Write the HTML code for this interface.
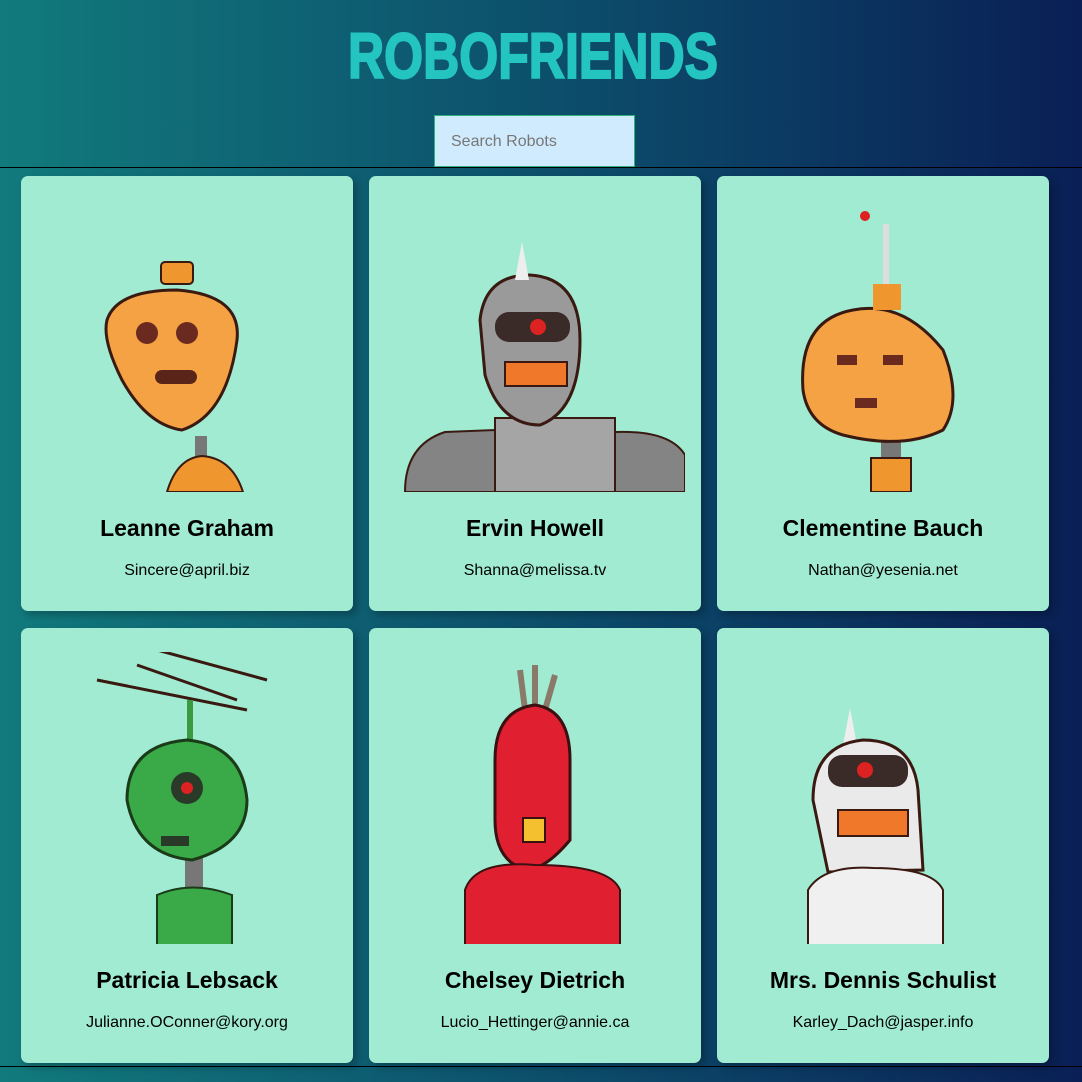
<!DOCTYPE html>
<html><head><meta charset="utf-8"><style>
*{margin:0;padding:0;box-sizing:border-box}
body{width:1082px;height:1082px;overflow:hidden;background:linear-gradient(90deg,#117a7c 0%,#0c4b6a 55%,#0a1f55 100%);font-family:"Liberation Sans",sans-serif}
.hdr{position:absolute;left:0;top:0;width:1082px;height:168px;border-bottom:1px solid #000}
.search{position:absolute;left:434px;top:115px;width:201px;height:52px;background:#d0ebfd;border:1px solid #2db27c;font-size:16px;color:#777;padding:17px 0 0 16px}
.card{position:absolute;width:332px;height:435px;background:#a0ebd2;border-radius:7px;box-shadow:4px 4px 8px rgba(0,0,0,.25);text-align:center;overflow:hidden}
.card svg{position:absolute;left:16px;top:24px}
.card h2{position:absolute;top:339px;width:100%;font-size:23px;font-weight:bold;color:#000}
.card p{position:absolute;top:386px;width:100%;font-size:16px;color:#000}
.bl{position:absolute;left:0;top:1066px;width:1082px;height:1px;background:#000}
</style></head><body>
<div class="hdr">
<svg width="1082" height="110" style="position:absolute;left:0;top:0">
<text x="348" y="78" textLength="370" lengthAdjust="spacingAndGlyphs" font-family="Liberation Sans" font-weight="bold" font-size="64" fill="#24c4c0" stroke="#24c4c0" stroke-width="2">ROBOFRIENDS</text>
</svg>
<div class="search">Search Robots</div>
</div>

<div class="card" style="left:21px;top:176px">
<svg width="300" height="292"><rect x="158" y="236" width="12" height="30" fill="#777"/><path d="M130 292 Q140 258 165 256 Q195 258 206 292Z" fill="#f0962e" stroke="#3a1a10" stroke-width="2"/><path d="M70 120 Q80 90 140 90 Q205 95 200 140 Q190 215 145 230 Q110 225 85 180 Q65 140 70 120Z" fill="#f5a244" stroke="#3a1a10" stroke-width="3"/><rect x="124" y="62" width="32" height="22" rx="4" fill="#f0962e" stroke="#3a1a10" stroke-width="2"/><circle cx="110" cy="133" r="11" fill="#6b2a20"/><circle cx="150" cy="133" r="11" fill="#6b2a20"/><rect x="118" y="170" width="42" height="14" rx="7" fill="#5a2418"/></svg>
<h2>Leanne Graham</h2><p>Sincere@april.biz</p></div>

<div class="card" style="left:369px;top:176px">
<svg width="300" height="292"><path d="M20 292 Q20 245 60 232 L110 230 L115 292Z" fill="#848484" stroke="#3a1a10" stroke-width="2"/><path d="M230 292 L230 232 Q285 230 300 255 L300 292Z" fill="#848484" stroke="#3a1a10" stroke-width="2"/><rect x="110" y="218" width="120" height="74" fill="#a5a5a5" stroke="#3a1a10" stroke-width="2"/><path d="M95 120 Q100 75 145 75 Q195 78 195 140 Q195 210 155 225 Q115 225 100 175Z" fill="#9a9a9a" stroke="#3a1a10" stroke-width="3"/><path d="M130 80 L137 42 L144 80Z" fill="#eee"/><rect x="110" y="112" width="75" height="30" rx="14" fill="#3a2a28"/><circle cx="153" cy="127" r="8" fill="#d22"/><rect x="120" y="162" width="62" height="24" fill="#f0782a" stroke="#3a1a10" stroke-width="2"/></svg>
<h2>Ervin Howell</h2><p>Shanna@melissa.tv</p></div>

<div class="card" style="left:717px;top:176px">
<svg width="300" height="292"><rect x="148" y="230" width="20" height="60" fill="#777"/><rect x="138" y="258" width="40" height="34" fill="#f0962e" stroke="#3a1a10" stroke-width="2"/><path d="M70 190 Q65 120 120 110 Q170 100 210 150 Q230 200 210 230 Q170 250 110 235 Q75 225 70 190Z" fill="#f5a244" stroke="#3a1a10" stroke-width="3"/><rect x="140" y="84" width="28" height="26" fill="#f0962e"/><rect x="150" y="24" width="6" height="60" fill="#ddd"/><circle cx="132" cy="16" r="5" fill="#d22"/><rect x="104" y="155" width="20" height="10" fill="#6b2a20"/><rect x="150" y="155" width="20" height="10" fill="#6b2a20"/><rect x="122" y="198" width="22" height="10" fill="#6b2a20"/></svg>
<h2>Clementine Bauch</h2><p>Nathan@yesenia.net</p></div>

<div class="card" style="left:21px;top:628px">
<svg width="300" height="292"><g transform="translate(0,-12)"><path d="M60 40 L210 70 M100 25 L200 60 M120 10 L230 40" stroke="#3a1a10" stroke-width="3"/><rect x="150" y="60" width="6" height="50" fill="#3a9a40"/><rect x="148" y="205" width="18" height="50" fill="#777"/><path d="M90 160 Q90 105 150 100 Q205 105 210 160 Q210 205 155 220 Q100 215 90 160Z" fill="#3aaa48" stroke="#1a3a18" stroke-width="3"/><circle cx="150" cy="148" r="16" fill="#2a3a28"/><circle cx="150" cy="148" r="6" fill="#d22"/><rect x="124" y="196" width="28" height="10" fill="#2a3a28"/><path d="M120 316 L120 255 Q155 240 195 255 L195 316Z" fill="#3aaa48" stroke="#1a3a18" stroke-width="2"/></g></svg>
<h2>Patricia Lebsack</h2><p>Julianne.OConner@kory.org</p></div>

<div class="card" style="left:369px;top:628px">
<svg width="300" height="292"><g transform="translate(0,-12)"><path d="M140 70 L135 30 M150 70 L150 25 M160 70 L170 35" stroke="#8a7a6a" stroke-width="6"/><path d="M110 120 Q110 70 150 65 Q185 70 185 120 L185 200 Q160 230 140 230 Q110 220 110 180Z" fill="#e02030" stroke="#3a1010" stroke-width="3"/><rect x="138" y="178" width="22" height="24" fill="#f5c030" stroke="#3a1010" stroke-width="2"/><path d="M80 316 L80 250 Q90 220 150 225 Q225 225 235 250 L235 316Z" fill="#e02030" stroke="#3a1010" stroke-width="2"/></g></svg>
<h2>Chelsey Dietrich</h2><p>Lucio_Hettinger@annie.ca</p></div>

<div class="card" style="left:717px;top:628px">
<svg width="300" height="292"><g transform="translate(0,-12)"><path d="M110 105 L117 68 L124 105Z" fill="#eee"/><path d="M80 160 Q80 105 130 100 Q180 100 185 150 L190 230 L95 232 Z" fill="#eaeaea" stroke="#3a1a10" stroke-width="3"/><rect x="95" y="115" width="80" height="32" rx="14" fill="#3a2a28"/><circle cx="132" cy="130" r="8" fill="#d22"/><rect x="105" y="170" width="70" height="26" fill="#f0782a" stroke="#3a1a10" stroke-width="2"/><path d="M75 316 L75 250 Q90 225 140 228 Q200 228 210 250 L210 316Z" fill="#f0f0f0" stroke="#3a1a10" stroke-width="2"/></g></svg>
<h2>Mrs. Dennis Schulist</h2><p>Karley_Dach@jasper.info</p></div>
<div class="bl"></div>
</body></html>
